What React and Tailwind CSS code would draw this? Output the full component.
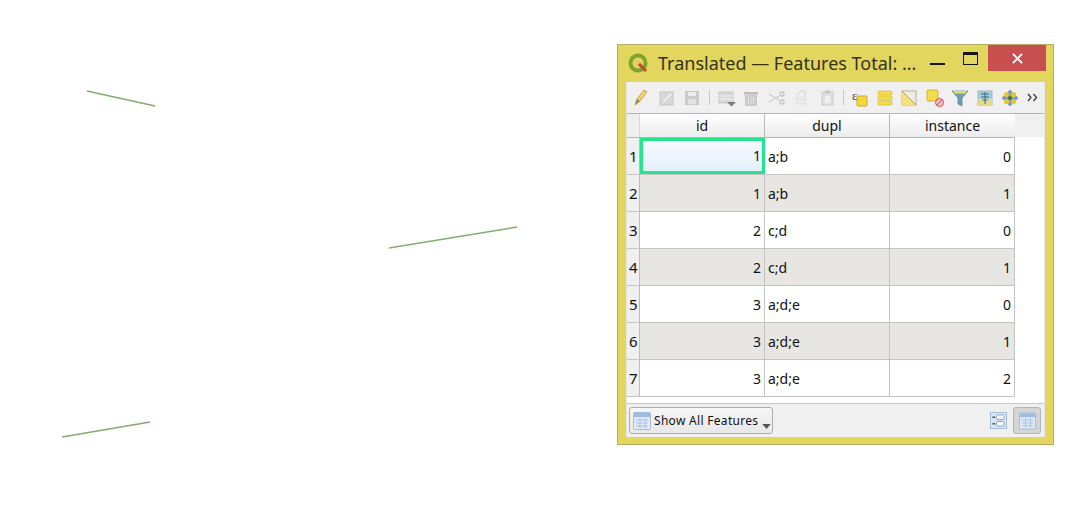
const rows = [
  [1, "a;b", 0],
  [1, "a;b", 1],
  [2, "c;d", 0],
  [2, "c;d", 1],
  [3, "a;d;e", 0],
  [3, "a;d;e", 1],
  [3, "a;d;e", 2],
];

const font = { fontFamily: '"Noto Sans", "Open Sans", sans-serif' };

function Ic({ children, className = "" }) {
  return (
    <svg viewBox="0 0 18 18" className={"w-[18px] h-[18px] shrink-0 " + className}>
      {children}
    </svg>
  );
}

const TableIcon = ({ size = "w-[18px] h-[18px]" }) => (
  <svg viewBox="0 0 18 18" className={size + " shrink-0"}>
    <rect x="0.5" y="0.5" width="17" height="17" rx="1" fill="#e2ebf5" stroke="#a3bcd8" />
    <rect x="1" y="1" width="16" height="4" fill="#9dbde0" />
    <path d="M3 8h12M3 11h12M3 14h12M7 6v10M12 6v10" stroke="#a8c2df" strokeWidth="1" />
  </svg>
);

function Toolbar() {
  return (
    <div className="h-[31px] bg-[#f0f0f0] flex items-center pl-[5px] pr-[3px] gap-[7px]">
      <Ic>
        <path d="M3 16l2-6 7-9 3 2-7 9z" fill="#ecd66a" stroke="#b39a3c" strokeWidth="0.8" />
        <path d="M3 16l2-6 3 2z" fill="#8a8a6a" />
      </Ic>
      <Ic className="ml-px">
        <rect x="2" y="3" width="13" height="13" fill="#d8d8d8" stroke="#c6c6c6" />
        <path d="M5 13l8-8" stroke="#efefef" strokeWidth="2" />
      </Ic>
      <Ic>
        <rect x="2" y="2" width="14" height="14" fill="#cbcbcb" />
        <rect x="5" y="3" width="8" height="4" fill="#ededed" />
        <rect x="5" y="10" width="8" height="5" fill="#e2e2e2" />
      </Ic>
      <div className="w-px h-[15px] bg-[#c8c8c8] mx-[1px]" />
      <Ic>
        <rect x="1" y="3" width="14" height="11" fill="#d8d8d8" stroke="#c6c6c6" />
        <path d="M1 7h14M1 10h14" stroke="#f0f0f0" />
        <path d="M9 13h9l-4.500 4.500z" fill="#7a7a7a" />
      </Ic>
      <Ic className="-ml-px">
        <rect x="3" y="6" width="12" height="11" fill="#cfcac6" />
        <rect x="2" y="3" width="14" height="2.500" fill="#bfbab6" />
        <path d="M6.500 8v7M9 8v7M11.500 8v7" stroke="#e6e3e0" />
      </Ic>
      <Ic className="ml-px">
        <path d="M1 5l10 6M1 13l10-6" stroke="#cccccc" strokeWidth="1.300" />
        <circle cx="14" cy="5" r="2" fill="none" stroke="#c4c4c4" strokeWidth="1.300" />
        <circle cx="14" cy="13" r="2" fill="none" stroke="#c4c4c4" strokeWidth="1.300" />
      </Ic>
      <Ic className="-ml-px">
        <path d="M5 5l4-3h4v13H5z" fill="#efefef" stroke="#d8d8d8" />
        <path d="M7 8h4M7 11h4" stroke="#dddddd" />
      </Ic>
      <Ic className="ml-px">
        <rect x="4" y="3" width="11" height="13" fill="#e0e0e0" stroke="#cccccc" />
        <rect x="7" y="1.500" width="5" height="3" fill="#c6c6c6" />
        <rect x="7" y="7" width="5" height="7" fill="#f2f2f2" />
      </Ic>
      <div className="w-px h-[15px] bg-[#c8c8c8]" />
      <Ic>
        <rect x="6" y="7" width="10" height="10" rx="1" fill="#f4d83c" stroke="#c9a92a" />
        <text x="1" y="11" fontSize="13" fill="#5c4636" style={{ fontFamily: '"Liberation Serif", serif' }}>ε</text>
      </Ic>
      <Ic>
        <rect x="2" y="2" width="14" height="4" rx="1" fill="#f4dc4c" stroke="#d3b93a" strokeWidth="0.700" />
        <rect x="2" y="7" width="14" height="4" rx="1" fill="#f4dc4c" stroke="#d3b93a" strokeWidth="0.700" />
        <rect x="2" y="12" width="14" height="4" rx="1" fill="#f4dc4c" stroke="#d3b93a" strokeWidth="0.700" />
      </Ic>
      <Ic className="-ml-px">
        <rect x="2" y="2" width="14" height="14" fill="#f0ece0" stroke="#b5b09c" />
        <path d="M2 2v14h14z" fill="#f6e27a" />
        <path d="M2 2l14 14" stroke="#9a9a8c" />
      </Ic>
      <Ic className="ml-px">
        <rect x="1" y="1" width="11" height="11" rx="1" fill="#f4dc4c" stroke="#c9a92a" strokeWidth="0.800" />
        <circle cx="13.500" cy="13.500" r="4" fill="#f2c2c2" stroke="#d34b4b" />
        <path d="M11 16l5-5" stroke="#d34b4b" />
      </Ic>
      <Ic>
        <path d="M1 2h16l-6 7v8l-4-2V9z" fill="#6f9fb8" stroke="#557f95" strokeWidth="0.700" />
        <path d="M2 2h14l-2 2.500H4z" fill="#f0da5a" />
      </Ic>
      <Ic>
        <rect x="2" y="2" width="14" height="14" fill="#a9cfd8" stroke="#9fb8bc" />
        <rect x="2" y="10" width="14" height="6" fill="#e6d98a" />
        <path d="M5 5h8M5 8h8M9 3v12M6.500 11h5" stroke="#2f6f82" strokeWidth="1" />
      </Ic>
      <Ic>
        <path d="M9 1l8 8-8 8-8-8z" fill="#7d9ad0" stroke="#5d7ab0" strokeWidth="0.600" />
        <circle cx="5.500" cy="5.500" r="2.600" fill="#e4c92e" />
        <circle cx="12.500" cy="5.500" r="2.600" fill="#e4c92e" />
        <circle cx="5.500" cy="12.500" r="2.600" fill="#e4c92e" />
        <circle cx="12.500" cy="12.500" r="2.600" fill="#e4c92e" />
        <circle cx="9" cy="9" r="2" fill="#4f6f3f" />
      </Ic>
      <svg viewBox="0 0 11 9" className="ml-auto w-[11px] h-[9px] mr-[3px] shrink-0">
        <path d="M1 1l3 3.500-3 3.500M6.500 1l3 3.500-3 3.500" fill="none" stroke="#333" strokeWidth="1.200" />
      </svg>
    </div>
  );
}

function Table() {
  return (
    <div className="bg-white flex-1 min-h-0 border-t border-[#b4b4b4] text-[14px] text-[#111]">
      <div className="flex h-[23px] bg-[#f0f0f0]">
        <div className="w-[13px] bg-[#efefef] border-r border-[#d8d8d8]" />
        <div className="w-[125px] border-r border-[#b9b9b9] text-center leading-[24px] bg-gradient-to-b from-white to-[#ececec]">id</div>
        <div className="w-[125px] border-r border-[#b9b9b9] text-center leading-[24px] bg-gradient-to-b from-white to-[#ececec]">dupl</div>
        <div className="w-[125px] text-center leading-[24px] bg-gradient-to-b from-white to-[#ececec]">instance</div>
      </div>
      <div className="border-t border-[#b4b4b4] w-[388px]">
        {rows.map((r, i) => {
          const alt = i % 2 === 1;
          const bg = alt ? "bg-[#e8e6e3]" : "bg-white";
          return (
            <div key={i} className={"flex h-[37px] border-b border-[#c4c4c4] " + bg}>
              <div className="w-[13px] bg-[#f0f0f0] border-r border-[#bcbcbc] text-[15px] leading-[37px] pl-[2px]">{i + 1}</div>
              {i === 0 ? (
                <div className="w-[125px] h-[36px] border-[3px] border-[#22e58d] bg-gradient-to-b from-[#f6fafd] to-[#e3f0fa] text-right pr-px leading-[30px]">
                  {r[0]}
                </div>
              ) : (
                <div className="w-[125px] border-r border-[#c4c4c4] text-right pr-[3px] leading-[37px]">{r[0]}</div>
              )}
              <div className="w-[125px] border-r border-[#c4c4c4] pl-[3px] leading-[37px]">{r[1]}</div>
              <div className="w-[125px] border-r border-[#c4c4c4] text-right pr-[3px] leading-[37px]">{r[2]}</div>
            </div>
          );
        })}
      </div>
    </div>
  );
}

export default function App() {
  return (
    <div className="relative w-[1091px] h-[529px] bg-white overflow-hidden" style={font}>
      <svg className="absolute left-0 top-0" width="600" height="529">
        <g stroke="#82ad6c" strokeWidth="1.500" fill="none">
          <line x1="87" y1="91" x2="155" y2="106" />
          <line x1="389" y1="248" x2="517" y2="227" />
          <line x1="62" y1="437" x2="150" y2="422" />
        </g>
      </svg>

      <div className="absolute left-[617px] top-[44px] w-[437px] h-[401px] bg-[#e2d65f] border border-[#b5ad63] flex flex-col">
        <div className="h-[37px] flex items-start shrink-0 relative">
          <svg viewBox="0 0 20 20" className="w-[20px] h-[20px] ml-[10px] mt-[8px] shrink-0">
            <circle cx="10" cy="10" r="7.500" fill="none" stroke="#7fa32f" strokeWidth="4" />
            <circle cx="10" cy="10" r="3" fill="#e9c46a" />
            <path d="M11 11l7 7" stroke="#c9462d" strokeWidth="3" />
          </svg>
          <span className="ml-[10px] mt-[4px] text-[18px] leading-[28px] text-[#34321a] whitespace-nowrap">
            Translated — Features Total: ...
          </span>
          <div className="absolute right-[7px] top-0 flex items-start">
            <div className="w-[15px] h-[2px] bg-[#141414] mt-[18px] mr-[18px]" />
            <div className="w-[15px] h-[13px] border border-[#141414] border-t-[3px] mt-[7px] mr-[10px]" />
            <div className="w-[58px] h-[26px] bg-[#c94f4f] flex items-center justify-center">
              <svg viewBox="0 0 12 12" className="w-[11px] h-[11px]">
                <path d="M1 1l10 10M11 1L1 11" stroke="white" strokeWidth="2" />
              </svg>
            </div>
          </div>
        </div>
        <div className="ml-[8px] mr-[8px] h-[355px] flex flex-col bg-white border-l border-r border-[#e6e6e6] text-[#111]">
          <Toolbar />
          <Table />
          <div className="h-[34px] shrink-0 bg-[#f0f0f0] border-t border-[#c8c8c8] flex items-center pl-[2px] pr-[3px]">
            <div className="h-[27px] w-[144px] rounded-[3px] border border-[#adadad] bg-gradient-to-b from-[#f6f6f6] to-[#e8e8e8] flex items-center pl-[3px] relative">
              <TableIcon />
              <span className="ml-[3px] text-[12px] tracking-[0.3px] text-[#111] whitespace-nowrap">Show All Features</span>
              <svg viewBox="0 0 10 6" className="absolute right-[1px] bottom-[4px] w-[9px] h-[5px]">
                <path d="M0 0h10L5 6z" fill="#555" />
              </svg>
            </div>
            <div className="ml-auto flex items-center gap-[6px]">
              <svg viewBox="0 0 18 18" className="w-[17px] h-[17px]">
                <rect x="0.5" y="0.5" width="17" height="17" fill="#dbe6f3" stroke="#a3bcd8" />
                <rect x="7" y="3" width="8" height="5" rx="1.500" fill="#f4f8fc" stroke="#86a5cb" />
                <rect x="7" y="10" width="8" height="5" rx="1.500" fill="#f4f8fc" stroke="#86a5cb" />
                <path d="M2.500 5.500h3M2.500 12.500h3" stroke="#555" strokeWidth="1.500" />
              </svg>
              <div className="w-[28px] h-[27px] rounded-[3px] bg-[#d5d5d5] border border-[#b5b5b5] flex items-center justify-center">
                <TableIcon size="w-[17px] h-[18px]" />
              </div>
            </div>
          </div>
        </div>
      </div>
    </div>
  );
}
